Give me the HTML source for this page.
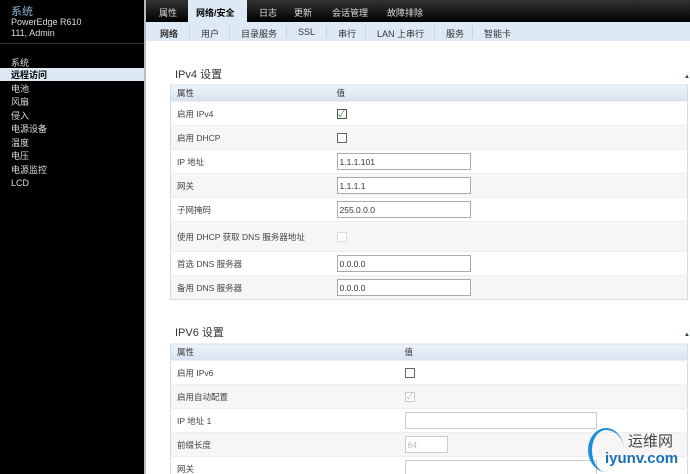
<!DOCTYPE html>
<html style="width:690px;height:474px;overflow:hidden"><head><meta charset="utf-8"><style>
*{margin:0;padding:0;box-sizing:border-box}
body{width:690px;height:474px;overflow:hidden;background:#fff;font-family:"Liberation Sans","Noto Sans CJK SC",sans-serif;font-size:9px;color:#333;position:relative}
.a{position:absolute}
#side{left:0;top:0;width:144px;height:474px;background:#000}
#side div{position:absolute;left:11px;color:#ddd;font-size:9px;white-space:nowrap}
#top{left:146px;top:0;width:544px;height:22px;background:linear-gradient(#333,#000)}
.tab{position:absolute;top:6px;color:#ddd;font-size:9px}
#sub{left:146px;top:22px;width:544px;height:19px;background:#dde9f5}
.st{position:absolute;top:5px;color:#333;font-size:9px}
.sep{position:absolute;top:4px;width:1px;height:12px;background:#c8d5e3}
table{position:absolute;border-collapse:collapse;border:1px solid #d4dbe3;left:170px;width:518px}
td{height:24px;padding-left:6px;font-size:8.5px;color:#444;border-top:1px solid #eee}
tr.h td{height:17px;background:linear-gradient(#eef3f9,#d6e2ef);color:#333}
tr.o td{background:#f8f5f6}
.cb{display:inline-block;width:10px;height:10px;border:1px solid #666;background:#fff;vertical-align:middle;position:relative}
.in{display:inline-block;height:17px;border:1px solid #aaa;background:#fff;vertical-align:middle;font-size:8.5px;padding:3px 2px;color:#333}
h3{position:absolute;font-weight:normal;font-size:11px;color:#333}
</style></head><body>
<div class="a" id="side">
<div style="top:3px;color:#8fb4d8;font-size:11px">系统</div>
<div style="top:17px">PowerEdge R610</div>
<div style="top:28px">111, Admin</div>
<div style="top:43px;left:0;width:144px;height:1px;background:#333"></div>
<div style="top:56px">系统</div>
<div style="top:68px;left:0;width:144px;height:13px;background:#dde9f5;color:#000;padding-left:11px;font-weight:bold">远程访问</div>
<div style="top:82px">电池</div>
<div style="top:95px">风扇</div>
<div style="top:109px">侵入</div>
<div style="top:122px">电源设备</div>
<div style="top:136px">温度</div>
<div style="top:149px">电压</div>
<div style="top:163px">电源监控</div>
<div style="top:178px">LCD</div>
</div>
<div class="a" style="left:144px;top:0;width:2px;height:474px;background:#bbb"></div>
<div class="a" id="top">
<span class="tab" style="left:13px">属性</span>
<div class="a" style="left:42px;top:0;width:59px;height:22px;background:#dde9f5"></div>
<span class="tab" style="left:50px;color:#000;font-weight:bold">网络/安全</span>
<span class="tab" style="left:113px">日志</span>
<span class="tab" style="left:148px">更新</span>
<span class="tab" style="left:186px">会话管理</span>
<span class="tab" style="left:241px">故障排除</span>
</div>
<div class="a" id="sub">
<span class="st" style="left:14px;font-weight:bold">网络</span><i class="sep" style="left:43px"></i>
<span class="st" style="left:55px">用户</span><i class="sep" style="left:83px"></i>
<span class="st" style="left:95px">目录服务</span><i class="sep" style="left:140px"></i>
<span class="st" style="left:152px">SSL</span><i class="sep" style="left:180px"></i>
<span class="st" style="left:192px">串行</span><i class="sep" style="left:219px"></i>
<span class="st" style="left:231px">LAN 上串行</span><i class="sep" style="left:288px"></i>
<span class="st" style="left:300px">服务</span><i class="sep" style="left:326px"></i>
<span class="st" style="left:338px">智能卡</span>
</div>
<h3 style="left:175px;top:66px">IPv4 设置</h3>
<div class="a" style="left:684px;top:74px;color:#246;font-size:6px">▲</div>
<table style="top:84px">
<tr class="h"><td style="width:160px">属性</td><td>值</td></tr>
<tr><td>启用 IPv4</td><td><span class="cb" style="border-color:#555;color:#393;font-size:9px;line-height:8px;text-align:center">✓</span></td></tr>
<tr class="o"><td>启用 DHCP</td><td><span class="cb"></span></td></tr>
<tr><td>IP 地址</td><td><span class="in" style="width:134px">1.1.1.101</span></td></tr>
<tr class="o"><td>网关</td><td><span class="in" style="width:134px">1.1.1.1</span></td></tr>
<tr><td>子网掩码</td><td><span class="in" style="width:134px">255.0.0.0</span></td></tr>
<tr class="o"><td style="height:30px">使用 DHCP 获取 DNS 服务器地址</td><td><span class="cb" style="border-color:#ddd"></span></td></tr>
<tr><td>首选 DNS 服务器</td><td><span class="in" style="width:134px">0.0.0.0</span></td></tr>
<tr class="o"><td>备用 DNS 服务器</td><td><span class="in" style="width:134px">0.0.0.0</span></td></tr>
</table>
<h3 style="left:175px;top:324px">IPV6 设置</h3>
<div class="a" style="left:684px;top:332px;color:#246;font-size:6px">▲</div>
<table style="top:343px">
<tr class="h"><td style="width:228px">属性</td><td>值</td></tr>
<tr><td>启用 IPv6</td><td><span class="cb"></span></td></tr>
<tr class="o"><td>启用自动配置</td><td><span class="cb" style="border-color:#ccc;color:#bbb;font-size:8px;line-height:8px;text-align:center">✓</span></td></tr>
<tr><td>IP 地址 1</td><td><span class="in" style="width:192px;border-color:#ccc"></span></td></tr>
<tr class="o"><td>前缀长度</td><td><span class="in" style="width:43px;border-color:#ccc;color:#bbb">64</span></td></tr>
<tr><td>网关</td><td><span class="in" style="width:192px;border-color:#ccc"></span></td></tr>
</table>
<div class="a" style="left:588px;top:428px;width:36px;height:44px;border-radius:50%;border-left:4px solid #1c8fd6;border-top:2px solid #1c8fd6"></div>
<div class="a" style="left:628px;top:430px;font-size:15px;color:#444">运维网</div>
<div class="a" style="left:605px;top:450px;font-size:15px;color:#1a6fb5;font-weight:bold">iyunv.com</div>
</body></html>
